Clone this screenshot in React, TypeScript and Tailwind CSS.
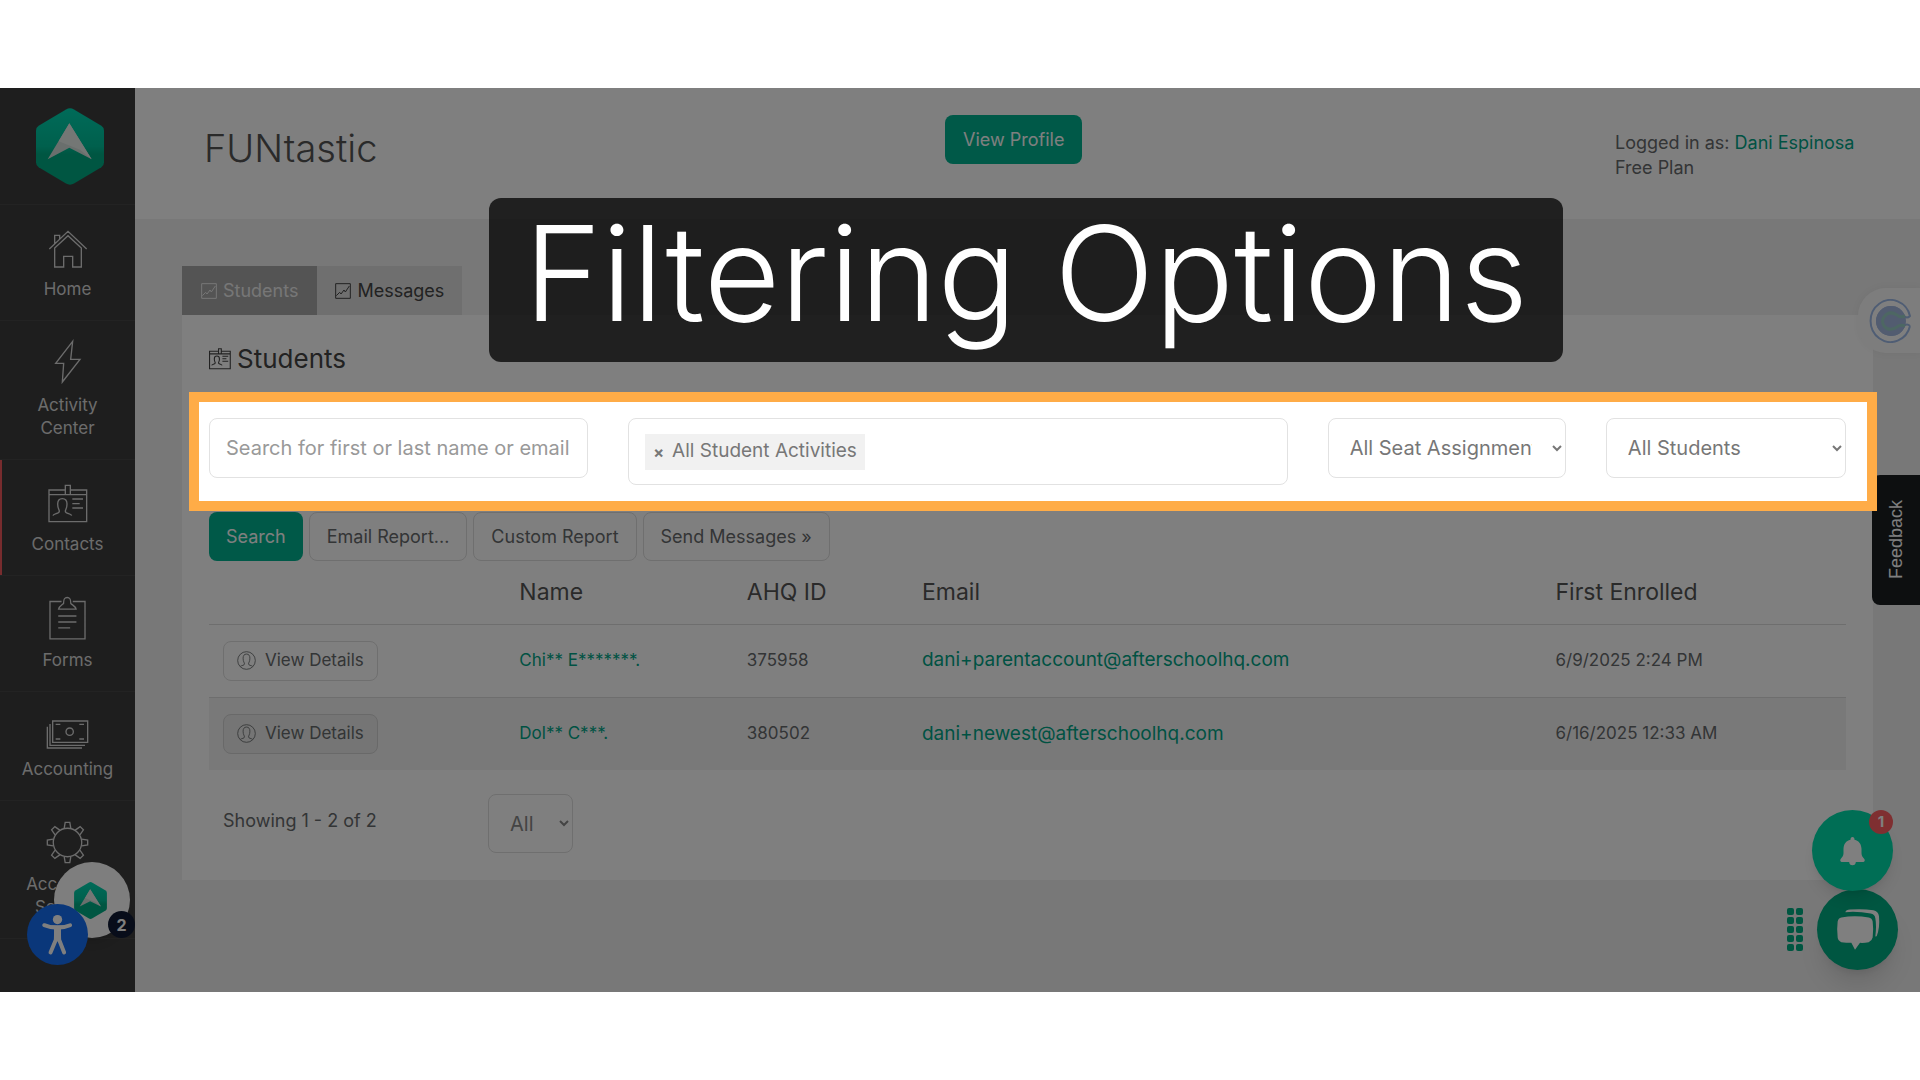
import React, { ReactNode, useId } from 'react';

function Logo({ className }: { className: string }) {
  const id = useId();
  return (
    <svg viewBox="0 0 204 230" className={className} aria-hidden="true">
      <defs>
        <linearGradient id={id} x1="0" y1="0" x2="0" y2="1">
          <stop offset="0" stopColor="#00d6b2" />
          <stop offset="0.5" stopColor="#00c09a" />
          <stop offset="0.6" stopColor="#00ac84" />
          <stop offset="1" stopColor="#00ac84" />
        </linearGradient>
      </defs>
      <path
        fill={`url(#${id})`}
        d="M90 4Q102-3 114 4L196 53Q204 58 204 68V162Q204 172 196 177L114 226Q102 233 90 226L8 177Q0 172 0 162V68Q0 58 8 53Z"
      />
      <path fill="#d4dfda" d="M100 45L35 153L100 119L167 153Z" />
      <path fill="#e8eeeb" d="M100 45L68 99L132 125L167 153Z" />
    </svg>
  );
}

function Line({ box, className, width = 4, children }: { box: string; className: string; width?: number; children: ReactNode }) {
  return (
    <svg viewBox={box} className={className} fill="none" stroke="currentColor" strokeWidth={width} aria-hidden="true">
      {children}
    </svg>
  );
}

const personPath =
  'M15 95C16 88 34 90 34 82C34 76 29 74 29 60C29 50 33 44 43 44C53 44 57 50 57 60C57 74 52 76 52 82C52 90 70 88 71 95';

function HomeIcon() {
  return (
    <Line box="0 0 120 120" className="size-10">
      <path d="M4 60L60 7L116 60M20 57V114H47V82H74V114H100V57L60 20ZM20 44V19H35V29" />
    </Line>
  );
}

function BoltIcon() {
  return (
    <Line box="0 0 84 141" className="h-[47px] w-7">
      <path d="M56 10L5 76H29L25 132L78 64H50Z" />
    </Line>
  );
}

function CardIcon({ className, width = 4 }: { className: string; width?: number }) {
  return (
    <Line box="0 0 120 120" className={className} width={width}>
      <path d="M52 18H3V113H116V18H67M3 32H52M67 32H116M52 4H67V32H52ZM73 45H105M73 59H95M73 72H105" />
      <path d={personPath} />
    </Line>
  );
}

function ClipboardIcon() {
  return (
    <Line box="0 0 112 132" className="h-11 w-[37px]">
      <path d="M38 16H3V129H109V16H72M29 39C31 30 39 27 44 22C44 8 47 4 55 4C63 4 66 8 66 22C71 27 80 30 82 39ZM28 60H83M28 78H83M28 96H64" />
    </Line>
  );
}

function MoneyIcon() {
  return (
    <Line box="0 0 129 87" className="h-[29px] w-[43px]">
      <path d="M20 3H125V67H20ZM12 12V76H117M4 20V84H108M29 13H43M100 13H114M29 57H43M100 57H114" />
      <circle cx="71" cy="35" r="11" />
    </Line>
  );
}

function GearIcon() {
  return (
    <Line box="-65 -65 130 130" className="size-[43px]">
      <circle r="43" />
      {[0, 45, 90, 135, 180, 225, 270, 315].map((a) => (
        <path key={a} transform={`rotate(${a})`} d="M-10-43L-7-61H7L10-43" />
      ))}
    </Line>
  );
}

function ChartIcon() {
  return (
    <Line box="0 0 48 48" className="size-4" width={3}>
      <path d="M2 2H46V46H2ZM4 38L14 28L18 33L27 21L31 27L43 9" />
    </Line>
  );
}

function UserIcon() {
  return (
    <Line box="0 0 56 56" className="size-[19px]" width={2.5}>
      <circle cx="28" cy="28" r="26" />
      <path d="M10 45C14 42 22 43 22 38C22 34 18 32 18 21C18 14 21 9 28 9C35 9 38 14 38 21C38 32 34 34 34 38C34 43 42 42 46 45" />
    </Line>
  );
}

const nav = [
  { label: 'Home', icon: <HomeIcon />, pad: 'pt-6', active: false },
  { label: 'Activity Center', icon: <BoltIcon />, pad: 'pt-[17px]', active: false },
  { label: 'Contacts', icon: <CardIcon className="size-10" />, pad: 'pt-6', active: true },
  { label: 'Forms', icon: <ClipboardIcon />, pad: 'pt-5', active: false },
  { label: 'Accounting', icon: <MoneyIcon />, pad: 'pt-7', active: false },
  { label: 'Account & Settings', icon: <GearIcon />, pad: 'pt-5', active: false },
];

function Sidebar() {
  return (
    <nav className="w-[135px] shrink-0 bg-[#3d3d3d] text-[#d8d8d8]">
      <a href="#top" aria-label="Dashboard" className="flex h-[117px] justify-center border-b border-[#464646] pl-[5px] pt-5">
        <Logo className="h-[77px] w-[68px]" />
      </a>
      {nav.map((n) => (
        <a
          key={n.label}
          href="#nav"
          className={`flex flex-col items-center gap-[9px] border-b border-[#464646] px-5 pb-[19px] text-center text-[17px] leading-[23px] ${n.pad} ${
            n.active ? 'shadow-[inset_2px_0_0_#f0585c]' : ''
          }`}
        >
          {n.icon}
          <span>{n.label}</span>
        </a>
      ))}
    </nav>
  );
}

const rows = [
  { name: 'Chi** E*******.', id: '375958', email: 'dani+parentaccount@afterschoolhq.com', date: '6/9/2025 2:24 PM' },
  { name: 'Dol** C***.', id: '380502', email: 'dani+newest@afterschoolhq.com', date: '6/16/2025 12:33 AM' },
];

function Filters() {
  return (
    <div className="relative grid grid-cols-[379fr_659fr_238fr_240fr] items-start gap-10 text-[20px]">
      <input
        type="text"
        aria-label="Search students"
        placeholder="Search for first or last name or email"
        className="h-[60px] w-full min-w-0 rounded-lg border border-[#e2e2e2] bg-white px-4 placeholder:text-[#999]"
      />
      <div className="flex h-[67px] items-center rounded-lg border border-[#e2e2e2] px-4">
        <span className="flex h-9 items-center gap-2 whitespace-nowrap bg-[#f1f1f1] px-2 text-[19px] text-[#777]">
          <button type="button" aria-label="Remove All Student Activities" className="text-[16px] font-bold">
            ×
          </button>
          All Student Activities
        </span>
      </div>
      <select aria-label="Seat assignment" className="h-[60px] w-full min-w-0 rounded-lg border border-[#e2e2e2] bg-white px-[17px] text-[#777]">
        <option>All Seat Assignments</option>
      </select>
      <select aria-label="Student group" className="h-[60px] w-full min-w-0 rounded-lg border border-[#e2e2e2] bg-white px-[17px] text-[#777]">
        <option>All Students</option>
      </select>
      <div className="pointer-events-none absolute -bottom-[26px] -left-5 -right-[31px] -top-[26px] z-20 border-[10px] border-[#ffac47] shadow-[0_0_0_2400px_rgba(0,0,0,0.5)]" />
    </div>
  );
}

function Panel() {
  const plain = 'h-[49px] rounded-lg border border-[#dedede] px-[17px]';
  return (
    <section className="bg-white px-[27px] pb-[27px] pt-[29px]">
      <h2 className="mb-11 flex items-center gap-[6px] text-[26px] leading-[30px] text-[#444]">
        <CardIcon className="size-[22px]" width={6} />
        Students
      </h2>
      <Filters />
      <div className="mt-[27px] flex gap-[6px] text-[18px]">
        <button type="button" className="h-[49px] rounded-lg bg-[#00b391] px-[17px] text-white">
          Search
        </button>
        <button type="button" className={plain}>Email Report...</button>
        <button type="button" className={plain}>Custom Report</button>
        <button type="button" className={plain}>Send Messages »</button>
      </div>
      <table className="w-full table-fixed border-collapse text-left">
        <thead>
          <tr className="h-[63px] text-[23px] text-[#555]">
            <th className="w-[18.1%]" aria-label="Actions" />
            <th className="w-[13.9%] px-[14px] font-normal">Name</th>
            <th className="w-[10.7%] px-[14px] font-normal">AHQ ID</th>
            <th className="w-[38.7%] px-[14px] font-normal">Email</th>
            <th className="px-[14px] font-normal">First Enrolled</th>
          </tr>
        </thead>
        <tbody className="text-[17px]">
          {rows.map((r, i) => (
            <tr key={r.id} className={`h-[73px] border-t border-[#dcdcdc] ${i % 2 ? 'bg-[#f3f3f3]' : ''}`}>
              <td className="px-[14px]">
                <button
                  type="button"
                  className={`flex h-10 items-center gap-[9px] whitespace-nowrap rounded-lg border px-[13px] ${
                    i % 2 ? 'border-[#d2d2d2] bg-[#eaeaea]' : 'border-[#dedede]'
                  }`}
                >
                  <UserIcon />
                  View Details
                </button>
              </td>
              <td className="px-[14px]"><a href="#student" className="text-[#00a587]">{r.name}</a></td>
              <td className="px-[14px]">{r.id}</td>
              <td className="px-[14px] text-[19px]"><a href="#email" className="text-[#00a587]">{r.email}</a></td>
              <td className="px-[14px]">{r.date}</td>
            </tr>
          ))}
        </tbody>
      </table>
      <div className="mt-6 flex items-start pl-[14px]">
        <p className="w-[265px] pt-[13px] text-[18px] leading-[27px]">Showing 1 - 2 of 2</p>
        <select aria-label="Rows per page" className="h-[59px] w-[85px] rounded-lg border border-[#dedede] bg-white px-[17px] text-[20px] text-[#888]">
          <option>All</option>
        </select>
      </div>
    </section>
  );
}

function Floats() {
  return (
    <>
      <button type="button" aria-label="Checklist" className="absolute bottom-[54px] left-[54px] z-10 flex size-[76px] items-center justify-center rounded-full bg-[#fcfcfc] pr-[3px] shadow-lg">
        <Logo className="h-[37px] w-[33px]" />
      </button>
      <span className="absolute bottom-[54px] left-[108px] z-10 flex size-[27px] items-center justify-center rounded-full bg-[#101b35] text-[16px] font-bold text-white">2</span>
      <button type="button" aria-label="Accessibility options" className="absolute bottom-[27px] left-[27px] z-10 size-[61px]">
        <svg viewBox="0 0 184 184" className="size-full" aria-hidden="true">
          <circle cx="92" cy="92" r="92" fill="#146ef5" />
          <circle cx="92" cy="47" r="14" fill="#fff" />
          <g stroke="#fff" strokeWidth="12" strokeLinecap="round" strokeLinejoin="round" fill="#fff">
            <path d="M52 64Q92 80 130 64" />
            <path d="M88 76H96L97 108L112 146M88 76L87 108L71 146" fill="none" />
            <path d="M88 76H96L96 106H88Z" />
          </g>
        </svg>
      </button>
      <button type="button" aria-label="Meeting scheduler" className="absolute right-0 top-[200px] z-10 flex h-[65px] w-[62px] items-center justify-center rounded-l-[28px] bg-[#fbfbfb] pl-1 shadow-[0_0_8px_rgba(0,0,0,0.05)]">
        <svg viewBox="0 0 44 44" className="size-[44px]" fill="none" aria-hidden="true">
          <path d="M41 27A20 21 0 1 1 41 17Q38 20 35 17Q31 8 22 8A14 14 0 0 0 22 36Q31 36 35 27Q38 24 41 27" fill="#fff" stroke="#9fbbe8" strokeWidth="2" />
          <circle cx="22" cy="22" r="15" fill="#a4b8e0" />
          <path d="M36 17Q31 19 28 16Q20 11 15 18Q12 22 15 27Q20 33 28 28Q31 25 36 27" stroke="#9bcfc6" strokeWidth="3" />
        </svg>
      </button>
      <button type="button" className="absolute right-0 top-[387px] z-10 flex h-[130px] w-12 items-center justify-center rounded-l-lg bg-[#1a1e21] font-['Liberation_Sans',sans-serif] text-[18px] text-white">
        <span className="rotate-180 [writing-mode:vertical-rl]">Feedback</span>
      </button>
      <button type="button" aria-label="Chat" className="absolute bottom-[22px] right-[22px] z-10 flex size-[81px] items-center justify-center rounded-full bg-[#00ac82] shadow-xl">
        <svg viewBox="0 0 132 128" className="h-[43px] w-11" aria-hidden="true">
          <path fill="#fff" d="M16 28Q56 20 98 28Q108 30 110 40Q113 62 110 88Q108 98 98 102Q84 105 72 104L57 125L46 104Q30 104 16 102Q6 98 5 88Q2 62 5 40Q7 30 16 28Z" />
          <path fill="#fff" d="M28 12Q30 5 42 4Q80 1 112 6Q127 9 129 24Q132 60 122 84L118 85Q122 52 118 30Q116 18 104 16Q66 9 28 12Z" />
        </svg>
      </button>
      <button type="button" aria-label="Notifications" className="absolute bottom-[101px] right-[27px] z-10 flex size-[81px] items-center justify-center rounded-full bg-[#00dcaa] shadow-lg">
        <svg viewBox="0 0 80 90" className="h-[30px] w-[27px]" aria-hidden="true">
          <path fill="#fff" d="M40 3C44 3 46 6 46 11C60 14 66 24 67 38V52C67 60 71 64 76 70C78 74 76 78 72 78H50C50 84 46 88 40 88C34 88 30 84 30 78H8C4 78 2 74 4 70C9 64 13 60 13 52V38C14 24 20 14 34 11C34 6 36 3 40 3Z" />
        </svg>
        <span className="absolute right-0 top-0 flex size-6 items-center justify-center rounded-full bg-[#ff5e62] text-[15px] font-bold text-white">1</span>
      </button>
      <div className="absolute bottom-[41px] right-[117px] z-10 grid grid-cols-2 gap-[2px]">
        {Array.from({ length: 10 }, (_, i) => (
          <i key={i} className="size-[7px] rounded-[2px] bg-[#00ac82]" />
        ))}
      </div>
    </>
  );
}

export default function App() {
  return (
    <div className="flex min-h-screen flex-col bg-white py-[88px] font-['Inter',sans-serif] text-[#676a6c]">
      <div className="relative flex flex-1 overflow-hidden bg-[#f0f0f0]">
        <Sidebar />
        <div className="min-w-0 flex-1">
          <header className="grid h-[131px] grid-cols-[741fr_670fr_244px] items-start bg-white pl-[69px] pr-[61px] pt-[27px] text-[18px]">
            <h1 className="text-[38px] font-light leading-[66px] text-[#555]">FUNtastic</h1>
            <button type="button" className="h-[49px] justify-self-start rounded-lg bg-[#00b391] px-[18px] text-white">
              View Profile
            </button>
            <p className="whitespace-nowrap pt-[15px] leading-[25px]">
              Logged in as: <a href="#me" className="text-[#00a587]">Dani Espinosa</a>
              <br />
              Free Plan
            </p>
          </header>
          <main className="p-[47px]">
            <div role="tablist" className="flex h-[49px] text-[18px]">
              <button type="button" role="tab" aria-selected="true" className="flex items-center gap-[6px] bg-[#a8a8a8] px-[19px] text-[#eee]">
                <ChartIcon />
                Students
              </button>
              <button type="button" role="tab" aria-selected="false" className="flex items-center gap-[6px] bg-[#dedede] px-[18px] text-[#444]">
                <ChartIcon />
                Messages
              </button>
            </div>
            <Panel />
          </main>
        </div>
        <Floats />
        <div className="absolute left-[489px] top-[110px] z-30 h-[164px] w-[1074px] rounded-xl bg-black/75 text-center text-[132px] font-light leading-[150px] text-white">
          Filtering Options
        </div>
      </div>
    </div>
  );
}
